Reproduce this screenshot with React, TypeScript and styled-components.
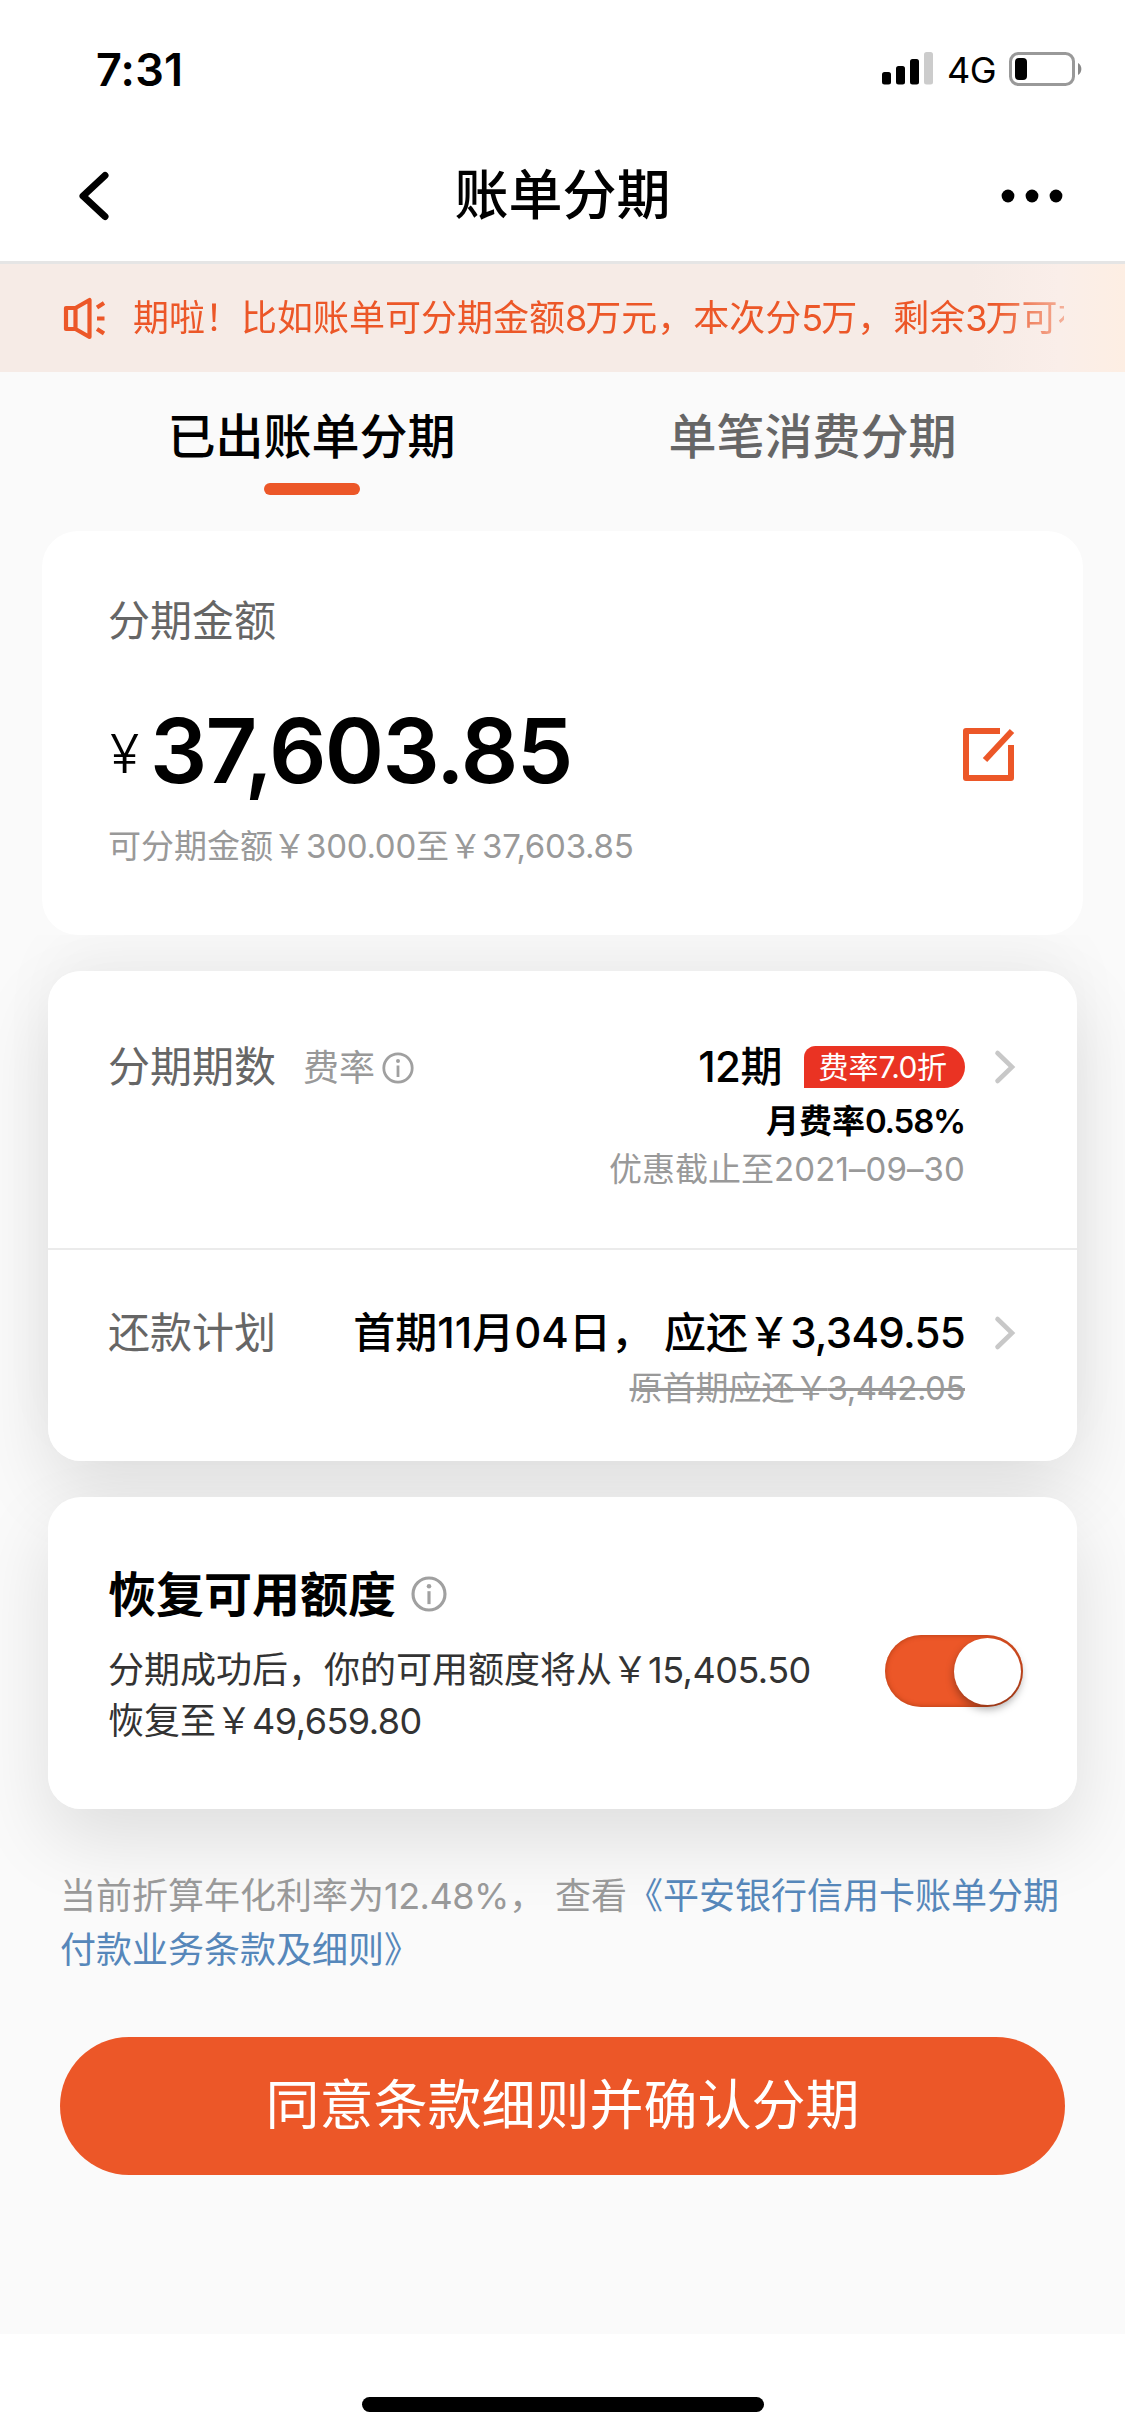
import React from 'react';
import styled, { createGlobalStyle } from 'styled-components';

const ORANGE = '#ec5728';

const GlobalStyle = createGlobalStyle`
  * { box-sizing: border-box; }
  body {
    margin: 0;
    background: #fff;
    color: #000;
    font-family: Inter, "Noto Sans CJK SC", sans-serif;
  }
`;

const Screen = styled.div`
  width: 1125px;
  height: 2436px;
  display: flex;
  flex-direction: column;
  background: #fff;
  overflow: hidden;
`;

const StatusBar = styled.header`
  height: 132px;
  flex: none;
  display: flex;
  align-items: center;
  justify-content: space-between;
  padding: 6px 42px 0 96px;
`;

const Clock = styled.span`
  font-size: 45px;
  font-weight: 600;
  letter-spacing: 0.2px;
`;

const StatusIcons = styled.div`
  display: flex;
  align-items: center;
`;

const Network = styled.span`
  font-size: 36px;
  font-weight: 400;
  line-height: 40px;
  margin: 1px 13px 0 13px;
  letter-spacing: -0.5px;
`;

const NavBar = styled.nav`
  height: 132px;
  flex: none;
  display: flex;
  align-items: center;
  justify-content: space-between;
  padding: 0 62px 1px 78px;
  border-bottom: 3px solid #e5e5e5;
`;

const NavTitle = styled.h1`
  margin: 0;
  font-size: 54px;
  line-height: 80px;
  font-weight: 500;
`;

const NavSide = styled.div<{ $width: number; $end?: boolean }>`
  width: ${(p) => p.$width}px;
  display: flex;
  justify-content: ${(p) => (p.$end ? 'flex-end' : 'flex-start')};
`;

const Notice = styled.div`
  height: 108px;
  flex: none;
  display: flex;
  align-items: center;
  padding-left: 62px;
  background: linear-gradient(90deg, #f6ebe6 0, #f6ebe6 970px, #faeee9 1060px, #fdeee3 1125px);
`;

const NoticeText = styled.div`
  width: 931px;
  margin-left: 27px;
  overflow: hidden;
  white-space: nowrap;
  font-size: 36px;
  line-height: 54px;
  color: ${ORANGE};
  mask-image: linear-gradient(90deg, #000 860px, rgba(0, 0, 0, 0.4) 932px);
`;

const Num = styled.span<{ $tight?: number }>`
  letter-spacing: ${(p) => -(p.$tight ?? 0.5)}px;
`;

const Body = styled.main`
  position: relative;
  height: 1962px;
  flex: none;
  display: flex;
  flex-direction: column;
  background: #fafafa;
`;

const Tabs = styled.div`
  height: 159px;
  flex: none;
  display: grid;
  grid-template-columns: 1fr 1fr;
  padding: 29px 62px 0 61px;
`;

const Tab = styled.div<{ $active?: boolean }>`
  display: flex;
  flex-direction: column;
  align-items: center;
  font-size: 48px;
  line-height: 72px;
  font-weight: 500;
  color: ${(p) => (p.$active ? '#000' : '#666')};

  &::after {
    content: '';
    width: 96px;
    height: 12px;
    margin-top: 10px;
    border-radius: 6px;
    background: ${(p) => (p.$active ? ORANGE : 'transparent')};
  }
`;

const AmountCard = styled.section`
  height: 404px;
  flex: none;
  margin: 0 42px;
  padding: 58px 66px 0;
  border-radius: 36px;
  background: #fff;
`;

const Label = styled.div`
  font-size: 42px;
  line-height: 63px;
  color: #666;
  white-space: nowrap;
`;

const AmountRow = styled.div`
  display: flex;
  align-items: center;
  justify-content: space-between;
  height: 100px;
  margin: 49px 0 21px;

  svg { margin-top: 7px; }
`;

const Amount = styled.div`
  display: flex;
  align-items: center;
  line-height: 100px;
  font-size: 90px;
  font-weight: 600;
`;

const Currency = styled.span`
  width: 42px;
  padding: 6px 0 0 2px;
  font-size: 54px;
  line-height: 100px;
  font-weight: 300;
`;

const Hint = styled.div<{ $strike?: boolean }>`
  font-size: 33px;
  line-height: 48px;
  color: #999;
  white-space: nowrap;
  text-decoration: ${(p) => (p.$strike ? 'line-through' : 'none')};
`;

const Lower = styled.div`
  flex: 1;
  display: flex;
  flex-direction: column;
  padding: 36px 48px 0;
  overflow: hidden;
`;

const CardStack = styled.div`
  flex: none;
  display: flex;
  flex-direction: column;
  gap: 36px;
  isolation: isolate;
`;

const Card = styled.section<{ $height: number; $glow?: boolean }>`
  position: relative;
  height: ${(p) => p.$height}px;
  flex: none;
  border-radius: 33px;
  background: #fff;

  /* The shadows sit under every card of the stack. */
  &::before {
    content: '';
    position: absolute;
    inset: 0;
    z-index: -1;
    border-radius: 33px;
    box-shadow: 0 30px 75px rgba(0, 0, 0, 0.115)
      ${(p) => (p.$glow ? ', 0 -30px 60px rgba(0, 0, 0, 0.03)' : '')};
  }
`;

const PlanRow = styled.div<{ $height: number; $top: number; $divided?: boolean }>`
  height: ${(p) => p.$height}px;
  display: flex;
  align-items: flex-start;
  padding: ${(p) => p.$top}px 61px 0 60px;
  border-bottom: ${(p) => (p.$divided ? '2px solid #ebebeb' : 'none')};
`;

const RateHint = styled.div`
  display: flex;
  align-items: center;
  gap: 7px;
  margin: 2px 0 0 27px;
  font-size: 36px;
  line-height: 63px;
  color: #999;

  svg { margin-bottom: 2px; }
`;

const Values = styled.div`
  flex: 1;
  display: flex;
  flex-direction: column;
  align-items: flex-end;
  margin-right: 29px;
  white-space: nowrap;
`;

const MainValue = styled.div`
  display: flex;
  align-items: center;
  font-size: 42px;
  line-height: 63px;
  font-weight: 500;
  white-space: pre;
`;

const SubValue = styled.div`
  margin: -1px 0 0;
  font-size: 33px;
  line-height: 48px;
  font-weight: 700;

  ${Num} { font-weight: 600; }
`;

const Tag = styled.span`
  height: 42px;
  margin-left: 22px;
  padding: 0 18px 0 14px;
  border-radius: 12px 22px 22px 0;
  background: #ea3323;
  color: #fff;
  font-size: 30px;
  line-height: 42px;
  font-weight: 400;
`;

const Chevron = styled.div`
  height: 63px;
  display: flex;
  align-items: center;
`;

const RestoreCard = styled(Card)`
  display: flex;
  align-items: center;
  justify-content: space-between;
  padding: 0 54px 0 60px;
`;

const RestoreTitle = styled.h2`
  display: flex;
  align-items: center;
  gap: 15px;
  margin: 0 0 14px;
  font-size: 48px;
  line-height: 72px;
  font-weight: 700;

  svg { margin-bottom: 2px; }
`;

const RestoreText = styled.p`
  margin: 0;
  font-size: 36px;
  line-height: 51px;
  color: #333;
  white-space: nowrap;
`;

const Toggle = styled.div`
  width: 138px;
  height: 72px;
  margin-top: 36px;
  padding: 0 2px;
  display: flex;
  align-items: center;
  justify-content: flex-end;
  border-radius: 36px;
  background: ${ORANGE};
  box-shadow: inset 0 0 4px 1px rgba(150, 50, 10, 0.5);
`;

const Knob = styled.div`
  width: 67px;
  height: 67px;
  border-radius: 50%;
  background: #fff;
  box-shadow: 0 4px 8px rgba(0, 0, 0, 0.35);
`;

const Terms = styled.p`
  position: relative;
  margin: 60px -10px 0 12px;
  font-size: 36px;
  line-height: 54px;
  color: #999;
  white-space: nowrap;
`;

const TermsLink = styled.a`
  color: #5687ba;
`;

const Submit = styled.button`
  flex: none;
  height: 138px;
  margin: 60px 12px 0;
  border: 0;
  border-radius: 69px;
  background: ${ORANGE};
  color: #fff;
  font: 400 54px/80px Inter, "Noto Sans CJK SC", sans-serif;
`;

const Watermark = styled.span<{ $top: number }>`
  position: absolute;
  left: 0;
  top: ${(p) => p.$top}px;
  font-size: 45px;
  line-height: 54px;
  letter-spacing: 1.2px;
  color: rgba(0, 0, 0, 0.016);
  pointer-events: none;
`;

const HomeArea = styled.footer`
  flex: 1;
  display: flex;
  justify-content: center;
  padding-top: 63px;
`;

const HomeBar = styled.div`
  width: 402px;
  height: 15px;
  border-radius: 8px;
  background: #000;
`;

const InfoIcon = ({ size }: { size: number }) => (
  <svg width={size} height={size} viewBox="0 0 32 32" fill="none" stroke="#a0a0a0" strokeWidth="2.8">
    <circle cx="16" cy="16" r="14.2" />
    <path d="M16 13.5V25" />
    <circle cx="16" cy="9" r="2" fill="#a0a0a0" stroke="none" />
  </svg>
);

const ChevronIcon = () => (
  <svg width="22" height="36" viewBox="0 0 22 36" fill="none" stroke="#c8c8c8" strokeWidth="4.6" strokeLinecap="round">
    <path d="M3.500 4L18 18 3.500 32" />
  </svg>
);

export default function App() {
  return (
    <>
      <GlobalStyle />
      <Screen>
        <StatusBar>
          <Clock>7:31</Clock>
          <StatusIcons>
            <svg width="52" height="34" viewBox="0 0 52 34">
              <rect x="0" y="20" width="9" height="12.5" rx="2.5" />
              <rect x="14" y="14" width="9" height="18.5" rx="2.5" />
              <rect x="28" y="7" width="9" height="25.5" rx="2.5" />
              <rect x="42" y="0" width="9" height="32.5" rx="2.5" fill="#ccc" />
            </svg>
            <Network>4G</Network>
            <svg width="74" height="34" viewBox="0 0 74 34">
              <rect x="1.5" y="1.5" width="63" height="31" rx="8" fill="none" stroke="#999" strokeWidth="3" />
              <rect x="6" y="6" width="12" height="22" rx="4" />
              <path d="M69 11a7 7 0 0 1 0 12z" fill="#888" />
            </svg>
          </StatusIcons>
        </StatusBar>

        <NavBar>
          <NavSide $width={120}>
            <svg width="32" height="50" viewBox="0 0 32 50" fill="none" stroke="#000" strokeWidth="7" strokeLinecap="round" strokeLinejoin="round">
              <path d="M27 4.500L5 25l22 20.500" />
            </svg>
          </NavSide>
          <NavTitle>账单分期</NavTitle>
          <NavSide $width={136} $end>
            <svg width="62" height="14" viewBox="0 0 62 14">
              <circle cx="7" cy="7" r="6.4" />
              <circle cx="31" cy="7" r="6.4" />
              <circle cx="55" cy="7" r="6.4" />
            </svg>
          </NavSide>
        </NavBar>

        <Notice>
          <svg width="44" height="44" viewBox="0 0 44 44" fill="none" stroke={ORANGE} strokeWidth="4.2" strokeLinejoin="round">
            <path d="M4 12H13.500L27.500 4v37L13.500 33H4zM13.500 12v21M35 11.500l7-4.500M35 22.500h7.500M35 33l7 4.500" />
          </svg>
          <NoticeText>
            期啦！比如账单可分期金额<Num $tight={2}>8</Num>万元，本次分<Num $tight={2}>5</Num>万，剩余
            <Num $tight={2}>3</Num>万可在
          </NoticeText>
        </Notice>

        <Body>
          <Tabs>
            <Tab $active>已出账单分期</Tab>
            <Tab>单笔消费分期</Tab>
          </Tabs>

          <AmountCard>
            <Label>分期金额</Label>
            <AmountRow>
              <Amount>
                <Currency>¥</Currency>
                <Num $tight={1.7}>37,603.85</Num>
              </Amount>
              <svg width="56" height="56" viewBox="0 0 56 56" fill="none" stroke={ORANGE} strokeWidth="6">
                <path d="M39 4H5v47h45V18" strokeLinejoin="round" />
                <path d="M24 33L51 4" />
              </svg>
            </AmountRow>
            <Hint>
              可分期金额￥<Num $tight={0.25}>300.00</Num>至￥<Num $tight={0.25}>37,603.85</Num>
            </Hint>
          </AmountCard>

          <Lower>
            <CardStack>
              <Card $height={490} $glow>
                <PlanRow $height={279} $top={64} $divided>
                  <Label>分期期数</Label>
                  <RateHint>
                    费率
                    <InfoIcon size={32} />
                  </RateHint>
                  <Values>
                    <MainValue>
                      <Num>12</Num>期
                      <Tag>
                        费率<Num>7.0</Num>折
                      </Tag>
                    </MainValue>
                    <SubValue>
                      月费率<Num $tight={1.2}>0.58%</Num>
                    </SubValue>
                    <Hint>
                      优惠截止至<Num $tight={-0.1}>2021–09–30</Num>
                    </Hint>
                  </Values>
                  <Chevron>
                    <ChevronIcon />
                  </Chevron>
                </PlanRow>
                <PlanRow $height={211} $top={51}>
                  <Label>还款计划</Label>
                  <Values>
                    <MainValue>
                      首期<Num $tight={0}>11</Num>月<Num $tight={0}>04</Num>日，&nbsp;应还￥
                      <Num $tight={0.7}>3,349.55</Num>
                    </MainValue>
                    <Hint $strike>
                      原首期应还￥<Num $tight={0.5}>3,442.05</Num>
                    </Hint>
                  </Values>
                  <Chevron>
                    <ChevronIcon />
                  </Chevron>
                </PlanRow>
              </Card>

              <RestoreCard $height={312}>
                <div>
                  <RestoreTitle>
                    恢复可用额度
                    <InfoIcon size={36} />
                  </RestoreTitle>
                  <RestoreText>
                    分期成功后，你的可用额度将从￥<Num>15,405.50</Num>
                    <br />
                    恢复至￥<Num>49,659.80</Num>
                  </RestoreText>
                </div>
                <Toggle>
                  <Knob />
                </Toggle>
              </RestoreCard>
            </CardStack>

            <Terms>
              当前折算年化利率为<Num $tight={0.5}>12.48%</Num>，&nbsp;查看
              <TermsLink>
                《平安银行信用卡账单分期
                <br />
                付款业务条款及细则》
              </TermsLink>
            </Terms>
            <Submit>同意条款细则并确认分期</Submit>
          </Lower>

          <Watermark $top={46}>P21092719300604339</Watermark>
          <Watermark $top={408}>P21092719300604339</Watermark>
          <Watermark $top={948}>P21092719300604339</Watermark>
          <Watermark $top={1698}>P2</Watermark>
        </Body>

        <HomeArea>
          <HomeBar />
        </HomeArea>
      </Screen>
    </>
  );
}
